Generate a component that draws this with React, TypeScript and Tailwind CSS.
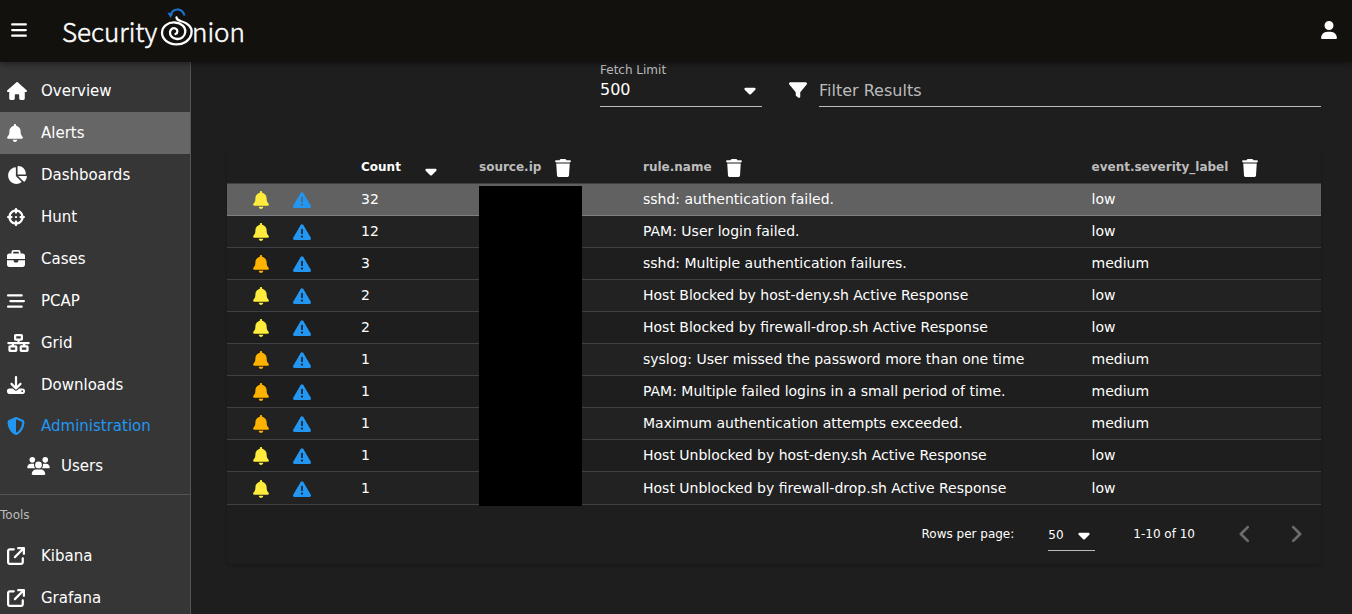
import type { ReactNode } from "react";
import type { IconType } from "react-icons";
import {
  FaAngleLeft,
  FaAngleRight,
  FaArrowUpRightFromSquare,
  FaBars,
  FaBarsStaggered,
  FaBell,
  FaBriefcase,
  FaCaretDown,
  FaChartPie,
  FaCrosshairs,
  FaDownload,
  FaFilter,
  FaHouse,
  FaNetworkWired,
  FaShieldHalved,
  FaTrash,
  FaTriangleExclamation,
  FaUser,
  FaUsers,
} from "react-icons/fa6";

type Severity = "low" | "medium";

const alerts: { count: number; rule: string; severity: Severity }[] = [
  { count: 32, rule: "sshd: authentication failed.", severity: "low" },
  { count: 12, rule: "PAM: User login failed.", severity: "low" },
  { count: 3, rule: "sshd: Multiple authentication failures.", severity: "medium" },
  { count: 2, rule: "Host Blocked by host-deny.sh Active Response", severity: "low" },
  { count: 2, rule: "Host Blocked by firewall-drop.sh Active Response", severity: "low" },
  { count: 1, rule: "syslog: User missed the password more than one time", severity: "medium" },
  { count: 1, rule: "PAM: Multiple failed logins in a small period of time.", severity: "medium" },
  { count: 1, rule: "Maximum authentication attempts exceeded.", severity: "medium" },
  { count: 1, rule: "Host Unblocked by host-deny.sh Active Response", severity: "low" },
  { count: 1, rule: "Host Unblocked by firewall-drop.sh Active Response", severity: "low" },
];

interface NavItem {
  label: string;
  icon: IconType;
  iconWidth: string;
  active?: boolean;
}

const navItems: NavItem[] = [
  { label: "Overview", icon: FaHouse, iconWidth: "w-5" },
  { label: "Alerts", icon: FaBell, iconWidth: "w-4", active: true },
  { label: "Dashboards", icon: FaChartPie, iconWidth: "w-5" },
  { label: "Hunt", icon: FaCrosshairs, iconWidth: "w-[18px]" },
  { label: "Cases", icon: FaBriefcase, iconWidth: "w-[18px]" },
  { label: "PCAP", icon: FaBarsStaggered, iconWidth: "w-[18px]" },
  { label: "Grid", icon: FaNetworkWired, iconWidth: "w-[23px]" },
  { label: "Downloads", icon: FaDownload, iconWidth: "w-[18px]" },
];

const toolItems: NavItem[] = [
  { label: "Kibana", icon: FaArrowUpRightFromSquare, iconWidth: "w-[18px]" },
  { label: "Grafana", icon: FaArrowUpRightFromSquare, iconWidth: "w-[18px]" },
];

function Logo() {
  return (
    <svg viewBox="0 0 190 62" className="h-[62px] w-[190px]" role="img" aria-label="Security Onion">
      <g
        fill="#fff"
        stroke="#fff"
        strokeWidth="0.5"
        fontFamily="'Noto Sans CJK SC', 'Open Sans', sans-serif"
        fontSize="26"
        fontWeight="300"
      >
        <text x="0" y="42">Security</text>
        <text x="130" y="42">nion</text>
      </g>
      <path
        fill="none"
        stroke="#fff"
        strokeLinecap="round"
        strokeWidth="2.3"
        d="M114.5 17.5C115 21.500 120 20.500 124.500 23.500C128.500 26 130.500 30 129.300 34.500C127.500 41 121 44.500 114 44.300C106 44 100 39 100 32.800C100 26.500 106 22 113 22.500C119.500 23 123.800 27 123.300 32C122.800 36.500 119 39.300 115 39C110.500 38.700 107.600 35.500 108 32C108.400 29 111 27.500 113.500 28.500C116 29.600 116 33 113.500 34"
      />
      <path d="M108.500 15C110 11 113 9 116.500 9.500C119.500 10 121.500 12 122.500 15.500" fill="none" stroke="#1976d2" strokeWidth="2" />
      <path d="M105.500 12.500L108.500 18L111 13.500z" fill="#1976d2" />
    </svg>
  );
}

function NavLink({ label, icon: Icon, iconWidth, active }: NavItem) {
  return (
    <a href="#" className={`flex h-[42px] items-center pl-[7px] ${active ? "bg-[#666666]" : ""}`}>
      <span className="w-[34px]">
        <Icon className={`h-[18px] ${iconWidth}`} />
      </span>
      {label}
    </a>
  );
}

function Sidebar() {
  return (
    <nav className="w-[191px] shrink-0 overflow-hidden border-r border-[#545454] bg-[#363636] pt-2 text-[15px] text-white">
      {navItems.map((item) => (
        <NavLink key={item.label} {...item} />
      ))}
      <button type="button" className="flex h-10 w-full items-center pl-[7px] text-[#2196f3]">
        <span className="w-[34px]">
          <FaShieldHalved className="size-[18px]" />
        </span>
        Administration
      </button>
      <a href="#" className="flex h-10 items-center pl-[27px]">
        <span className="w-[34px]">
          <FaUsers className="h-[18px] w-[23px]" />
        </span>
        Users
      </a>
      <div className="mt-2 flex h-[41px] items-center border-t border-[#545454] text-xs text-[#bcbcbc]">Tools</div>
      {toolItems.map((item) => (
        <NavLink key={item.label} {...item} />
      ))}
    </nav>
  );
}

function FieldHeader({ children }: { children: ReactNode }) {
  return (
    <th scope="col" className="px-4 text-left font-bold text-[#bcbcbc]">
      <span className="flex items-center gap-[14px]">
        {children}
        <button type="button" aria-label={`Remove ${children}`} className="mt-[2px] text-white">
          <FaTrash className="h-[18px] w-4" />
        </button>
      </span>
    </th>
  );
}

function AlertsTable() {
  return (
    <table className="w-full table-fixed border-collapse text-sm text-white">
      <colgroup>
        <col className="w-[118px]" />
        <col className="w-[118px]" />
        <col className="w-[164px]" />
        <col className="w-[41%]" />
        <col />
      </colgroup>
      <thead>
        <tr className="h-8 border-b border-[#404040] text-xs">
          <td />
          <th scope="col" className="px-4 text-left font-bold">
            <button type="button" className="flex items-center gap-6">
              Count
              <FaCaretDown className="mt-2 h-[18px] w-3" />
            </button>
          </th>
          <FieldHeader>source.ip</FieldHeader>
          <FieldHeader>rule.name</FieldHeader>
          <FieldHeader>event.severity_label</FieldHeader>
        </tr>
      </thead>
      <tbody>
        {alerts.map((alert, i) => (
          <tr
            key={alert.rule}
            className={`h-8 border-b last:h-[33px] ${
              i === 0 ? "border-[#808080] bg-[#616161]" : i % 2 ? "border-[#404040] bg-[#222222]" : "border-[#404040]"
            }`}
          >
            <td className="pt-[2px] pl-[26px]">
              <span className="flex items-center gap-6">
                <button
                  type="button"
                  aria-label="Acknowledge"
                  className={alert.severity === "low" ? "text-[#ffeb3b]" : "text-[#ffb300]"}
                >
                  <FaBell className="h-[18px] w-4" />
                </button>
                <button type="button" aria-label="Escalate" className="text-[#2196f3]">
                  <FaTriangleExclamation className="size-[18px]" />
                </button>
              </span>
            </td>
            <td className="px-4">{alert.count}</td>
            <td className="relative px-4">
              {i === 0 && <span className="absolute top-[2px] left-4 z-10 h-80 w-[103px] bg-black" />}
            </td>
            <td className="truncate px-4">{alert.rule}</td>
            <td className="px-4">{alert.severity}</td>
          </tr>
        ))}
      </tbody>
    </table>
  );
}

export default function App() {
  return (
    <div className="flex h-screen flex-col overflow-hidden bg-[#1e1e1e] font-['DejaVu_Sans',sans-serif] text-white">
      <header className="relative z-20 flex h-[62px] shrink-0 items-center bg-[#12110d] pr-[15px] pl-[11px] shadow-[0_2px_6px_rgba(0,0,0,0.4)]">
        <button type="button" aria-label="Menu" className="pb-[2px]">
          <FaBars className="h-[18px] w-4" />
        </button>
        <a href="#" className="ml-[35px]">
          <Logo />
        </a>
        <button type="button" aria-label="Account" className="ml-auto pb-[2px]">
          <FaUser className="h-[18px] w-4" />
        </button>
      </header>

      <div className="flex min-h-0 flex-1">
        <Sidebar />
        <main className="min-w-0 flex-1 overflow-hidden pr-[31px] pl-9">
          <div className="flex items-end pl-[373px] text-[15px]">
            <div className="w-[162px] shrink-0">
              <label htmlFor="fetch-limit" className="block text-xs text-[#bcbcbc]">
                Fetch Limit
              </label>
              <div className="flex h-[29px] items-center border-b border-[#bcbcbc] pb-1">
                <select id="fetch-limit" className="min-w-0 flex-1 appearance-none bg-transparent text-base outline-none">
                  <option>500</option>
                </select>
                <FaCaretDown className="mr-[6px] h-[18px] w-3" />
              </div>
            </div>
            <FaFilter className="mb-2 ml-[27px] size-[18px] shrink-0" />
            <input
              type="text"
              aria-label="Filter Results"
              placeholder="Filter Results"
              className="ml-3 h-[29px] min-w-0 flex-1 border-b border-[#bcbcbc] bg-transparent pb-[3px] text-base outline-none placeholder:text-[#bcbcbc]"
            />
          </div>

          <section className="mt-11 rounded-b shadow-[0_2px_3px_rgba(0,0,0,0.2)]">
            <AlertsTable />
            <footer className="flex h-[59px] items-center justify-end pr-[14px] text-xs">
              <label htmlFor="page-size">Rows per page:</label>
              <div className="mt-[2px] ml-[34px] flex h-[31px] w-[47px] items-center border-b border-[#bcbcbc]">
                <select id="page-size" className="min-w-0 flex-1 appearance-none bg-transparent outline-none">
                  <option>50</option>
                </select>
                <FaCaretDown className="mr-[5px] h-[18px] w-3" />
              </div>
              <span className="ml-[38px]">1-10 of 10</span>
              <button type="button" aria-label="Previous page" disabled className="ml-[39px] text-[#6b6b6b]">
                <FaAngleLeft className="size-[22px]" />
              </button>
              <button type="button" aria-label="Next page" disabled className="ml-[29px] text-[#6b6b6b]">
                <FaAngleRight className="size-[22px]" />
              </button>
            </footer>
          </section>
        </main>
      </div>
    </div>
  );
}
